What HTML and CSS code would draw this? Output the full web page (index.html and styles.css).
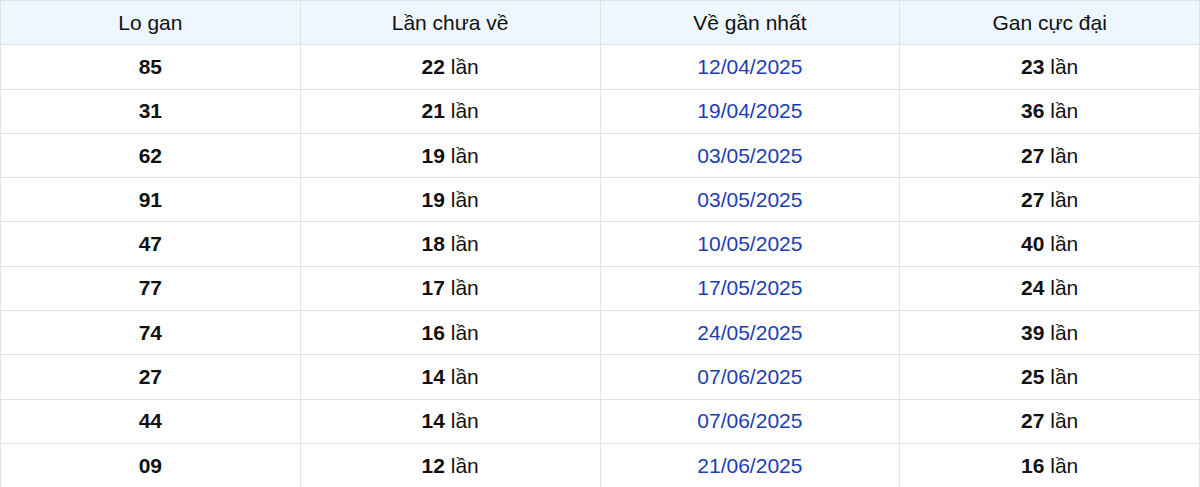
FILE: index.html
```html
<!DOCTYPE html>
<html lang="vi">
<head>
<meta charset="utf-8">
<link rel="stylesheet" href="styles.css">
</head>
<body>
<table class="gan-table">
  <thead>
    <tr><th>Lo gan</th><th>Lần chưa về</th><th>Về gần nhất</th><th>Gan cực đại</th></tr>
  </thead>
  <tbody>
    <tr><td class="num">85</td><td><b>22</b> lần</td><td class="date">12/04/2025</td><td><b>23</b> lần</td></tr>
    <tr><td class="num">31</td><td><b>21</b> lần</td><td class="date">19/04/2025</td><td><b>36</b> lần</td></tr>
    <tr><td class="num">62</td><td><b>19</b> lần</td><td class="date">03/05/2025</td><td><b>27</b> lần</td></tr>
    <tr><td class="num">91</td><td><b>19</b> lần</td><td class="date">03/05/2025</td><td><b>27</b> lần</td></tr>
    <tr><td class="num">47</td><td><b>18</b> lần</td><td class="date">10/05/2025</td><td><b>40</b> lần</td></tr>
    <tr><td class="num">77</td><td><b>17</b> lần</td><td class="date">17/05/2025</td><td><b>24</b> lần</td></tr>
    <tr><td class="num">74</td><td><b>16</b> lần</td><td class="date">24/05/2025</td><td><b>39</b> lần</td></tr>
    <tr><td class="num">27</td><td><b>14</b> lần</td><td class="date">07/06/2025</td><td><b>25</b> lần</td></tr>
    <tr><td class="num">44</td><td><b>14</b> lần</td><td class="date">07/06/2025</td><td><b>27</b> lần</td></tr>
    <tr><td class="num">09</td><td><b>12</b> lần</td><td class="date">21/06/2025</td><td><b>16</b> lần</td></tr>
  </tbody>
</table>
</body>
</html>
```
FILE: styles.css
```css
html, body {
  margin: 0;
  padding: 0;
  background: #fff;
}
.gan-table {
  width: 1200px;
  border-collapse: collapse;
  table-layout: fixed;
  font-family: "Liberation Sans", Arial, sans-serif;
  font-size: 21px;
  color: #111;
}
.gan-table th,
.gan-table td {
  border: 1px solid #dfe2e8;
  text-align: center;
  vertical-align: middle;
  padding: 0;
  height: 44.3px;
  box-sizing: border-box;
}
.gan-table th {
  font-weight: normal;
  background: #eef6ff;
  color: #111;
}
.gan-table td.num,
.gan-table b {
  font-weight: bold;
}
.gan-table td.date {
  color: #1c3db3;
}
```
